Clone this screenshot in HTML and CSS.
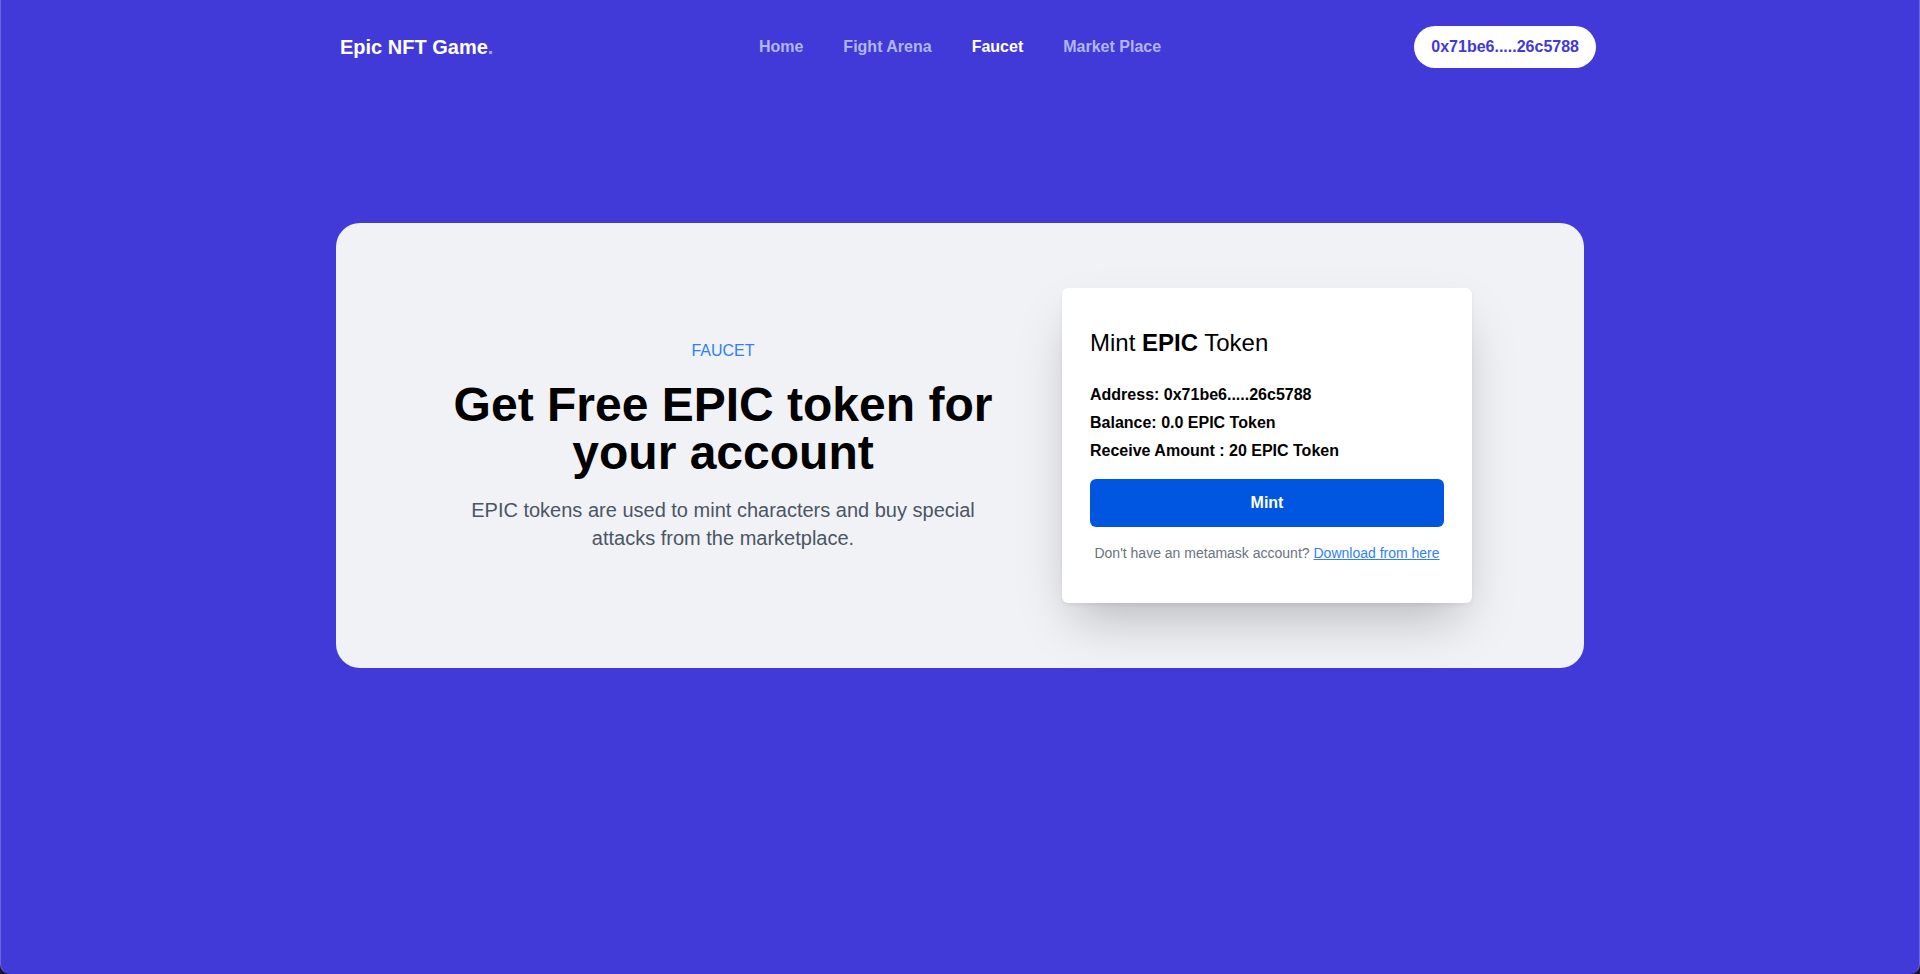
FILE: index.html
```html
<!DOCTYPE html>
<html lang="en">
<head>
<meta charset="utf-8">
<title>Epic NFT Game - Faucet</title>
<link rel="stylesheet" href="styles.css">
</head>
<body>
<div class="window">
  <header class="header">
    <div class="header-inner">
      <a class="logo" href="#">Epic NFT Game<span class="logo-dot">.</span></a>
      <nav class="nav">
        <a class="nav-link" href="#">Home</a>
        <a class="nav-link" href="#">Fight Arena</a>
        <a class="nav-link active" href="#">Faucet</a>
        <a class="nav-link" href="#">Market Place</a>
      </nav>
      <div class="wallet-wrap">
        <button class="wallet">0x71be6.....26c5788</button>
      </div>
    </div>
  </header>

  <main class="main">
    <section class="hero">
      <div class="hero-text">
        <p class="eyebrow">FAUCET</p>
        <h1 class="hero-title">Get Free EPIC token for your account</h1>
        <p class="hero-sub">EPIC tokens are used to mint characters and buy special attacks from the marketplace.</p>
      </div>
      <div class="mint-card">
        <h2 class="mint-title">Mint <strong>EPIC</strong> Token</h2>
        <div class="mint-rows">
          <p class="mint-row">Address: 0x71be6.....26c5788</p>
          <p class="mint-row">Balance: 0.0 EPIC Token</p>
          <p class="mint-row">Receive Amount : 20 EPIC Token</p>
        </div>
        <button class="mint-btn">Mint</button>
        <p class="mint-note">Don't have an metamask account? <a class="mint-link" href="#">Download from here</a></p>
      </div>
    </section>
  </main>
</div>
</body>
</html>
```

FILE: styles.css
```css
* {
  box-sizing: border-box;
}

html, body {
  margin: 0;
  padding: 0;
  height: 100%;
}

body {
  background: #1b1a22;
  font-family: "Liberation Sans", Arial, Helvetica, sans-serif;
  color: #000;
}

.window {
  height: 974px;
  background: #413ad9;
  border-radius: 0 0 10px 10px;
  border-left: 1px solid #6a64e3;
  border-right: 1px solid #6a64e3;
  overflow: hidden;
}

.header {
  padding-top: 26px;
}

.header-inner {
  width: 1280px;
  margin: 0 auto;
  padding: 0 4px;
  display: grid;
  grid-template-columns: 1fr auto 1fr;
  align-items: center;
  height: 42px;
}

.logo {
  padding-left: 16px;
  font-size: 20px;
  font-weight: 700;
  color: #ffffff;
  text-decoration: none;
  justify-self: start;
}

.logo-dot {
  color: #a7a3f0;
}

.nav {
  display: flex;
  gap: 40px;
}

.nav-link {
  font-size: 16px;
  font-weight: 700;
  color: #b3b5f5;
  text-decoration: none;
}

.nav-link.active {
  color: #ffffff;
}

.wallet-wrap {
  justify-self: end;
}

.wallet {
  border: none;
  background: #ffffff;
  color: #4338d8;
  font-family: inherit;
  font-size: 16px;
  font-weight: 700;
  line-height: 24px;
  padding: 9px 17px;
  border-radius: 999px;
  cursor: pointer;
}

.main {
  width: 1280px;
  margin: 155px auto 0;
  padding: 0 16px;
}

.hero {
  background: #f1f2f6;
  border-radius: 24px;
  padding: 65px 112px;
  display: flex;
  align-items: center;
  gap: 64px;
}

.hero-text {
  flex: 1;
  text-align: center;
}

.eyebrow {
  margin: 0;
  font-size: 16px;
  line-height: 24px;
  color: #2f7ff6;
}

.hero-title {
  margin: 18px 0 0;
  font-size: 48px;
  line-height: 48px;
  font-weight: 700;
  color: #000;
}

.hero-sub {
  margin: 19px 0 0;
  font-size: 20px;
  line-height: 28px;
  color: #4b5563;
}

.mint-card {
  width: 410px;
  flex: none;
  background: #ffffff;
  border-radius: 6px;
  padding: 39px 28px 40px;
  box-shadow: 0 25px 50px -12px rgba(0, 0, 0, 0.25), 0 2px 4px rgba(0, 0, 0, 0.06);
}

.mint-title {
  margin: 0 0 22px;
  font-size: 24px;
  line-height: 32px;
  font-weight: 400;
}

.mint-title strong {
  font-weight: 700;
}

.mint-row {
  margin: 0;
  font-size: 16px;
  line-height: 28px;
  font-weight: 700;
}

.mint-btn {
  display: block;
  width: 100%;
  height: 48px;
  margin-top: 14px;
  border: none;
  border-radius: 6px;
  background: #0056e0;
  color: #ffffff;
  font-family: inherit;
  font-size: 16px;
  font-weight: 700;
  cursor: pointer;
}

.mint-note {
  margin: 16px 0 0;
  font-size: 14px;
  line-height: 20px;
  color: #6b7280;
  text-align: center;
}

.mint-link {
  color: #2f7ff6;
  text-decoration: underline;
}
```
